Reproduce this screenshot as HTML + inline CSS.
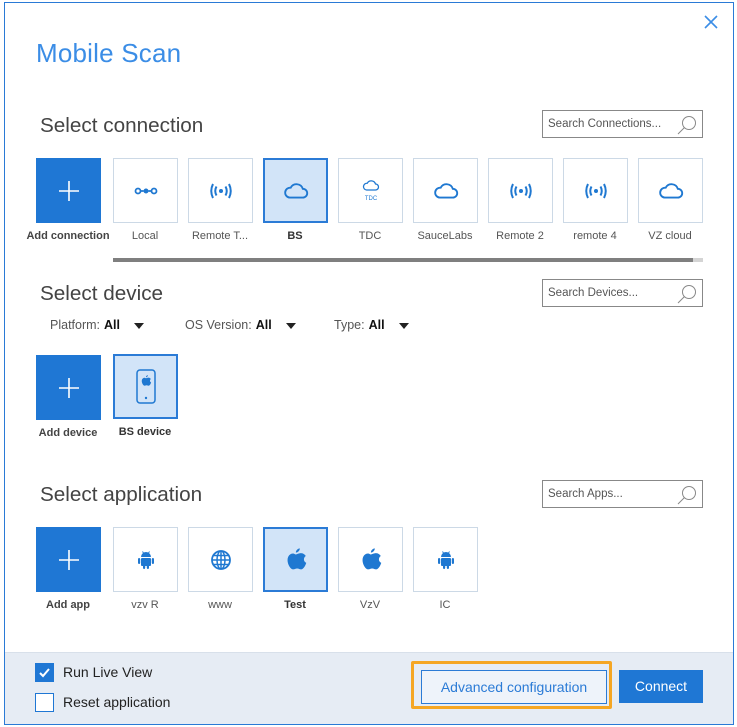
<!DOCTYPE html>
<html><head><style>
*{margin:0;padding:0;box-sizing:border-box}
body{width:737px;height:727px;background:#fff;position:relative;font-family:"Liberation Sans",sans-serif;overflow:hidden}
.win{position:absolute;left:4px;top:2px;width:730px;height:723px;border:1px solid #2a7ad6;background:#fff}
.foot{position:absolute;left:5px;top:652px;width:728px;height:72px;background:#e6ecf4;border-top:1px solid #d8e0ea}
.abs{position:absolute}
.h1{left:36px;top:38px;font-size:26px;color:#3b8de6;font-weight:300;letter-spacing:.2px}
.h2{font-size:20.7px;color:#444}
.tile{position:absolute;width:65px;height:65px;border:1px solid #ccd9e6;background:#fff;display:flex;align-items:center;justify-content:center;color:#1f78d1}
.tile.add{background:#1f77d4;border-color:#1f77d4}
.tile.sel{background:#d2e4f8;border:2px solid #2b7bd6}
.lbl{position:absolute;width:100px;text-align:center;font-size:11px;color:#555;white-space:nowrap}
.lbl.b{font-weight:bold;color:#333}
.search{position:absolute;left:542px;width:161px;height:28px;border:1px solid #888;font-size:11.5px;color:#555;padding:7px 0 0 5px}
.search svg{position:absolute;right:4px;top:3px}
.flt{position:absolute;top:318px;font-size:12.5px;color:#555}
.flt b{color:#111;margin-left:4px}
.tri{display:inline-block;width:0;height:0;border-left:5px solid transparent;border-right:5px solid transparent;border-top:6px solid #222;margin-left:14px;vertical-align:middle}
</style></head><body>
<div class="win"></div>
<div class="foot"></div>
<svg class="abs" style="left:703px;top:14px" width="16" height="16"><path d="M2 2L14 14M14 2L2 14" stroke="#3b8de6" stroke-width="1.6"/></svg>
<div class="abs h1">Mobile Scan</div>

<svg width="0" height="0" style="position:absolute"><defs>
<g id="rad"><circle cx="12" cy="8" r="2" fill="#1f78d1"/><path d="M7.5 3.5Q5 8 7.5 12.5M16.5 3.5Q19 8 16.5 12.5M4 1Q0.5 8 4 15M20 1Q23.5 8 20 15" fill="none" stroke="#1f78d1" stroke-width="2"/></g>
<g id="cld"><path d="M6 16H18A4 4 0 0 0 18 8A6 6 0 0 0 7 7A4.5 4.5 0 0 0 6 16Z" fill="none" stroke="#1f78d1" stroke-width="1.7"/></g>
<g id="apl"><path d="M12 6.5C13 6.5 14.5 5.5 16 5.5C18 5.5 19.3 6.8 19.8 7.7C17.8 9 18 12 20.2 13C19.6 15 18 18 16.2 18C15 18 14.6 17.3 13.2 17.3C11.8 17.3 11.3 18 10 18C8 18 5.8 14 5.8 11C5.8 7.5 8 5.8 10 5.8C11 5.8 11.6 6.5 12 6.5ZM12.2 5C12.2 3.5 13.5 2 15.2 1.8C15.3 3.5 13.8 5 12.2 5Z" fill="#1f78d1"/></g>
<g id="and"><path d="M7 9A5 5 0 0 1 17 9Z" fill="#1f78d1"/><rect x="7" y="10" width="10" height="8" rx="1" fill="#1f78d1"/><rect x="4" y="10" width="2.2" height="6" rx="1.1" fill="#1f78d1"/><rect x="17.8" y="10" width="2.2" height="6" rx="1.1" fill="#1f78d1"/><rect x="9" y="17" width="2.2" height="4" rx="1.1" fill="#1f78d1"/><rect x="12.8" y="17" width="2.2" height="4" rx="1.1" fill="#1f78d1"/><path d="M8.5 3.5L9.5 5M15.5 3.5L14.5 5" stroke="#1f78d1"/></g>
<g id="plus"><path d="M10 0V20M0 10H20" stroke="#fff" stroke-width="1.6"/></g>
<g id="mag"><circle cx="13" cy="9" r="6.5" fill="none" stroke="#888"/><path d="M8.5 13.5L2 20" stroke="#888"/></g>
</defs></svg>

<div class="abs h2" style="left:40px;top:114px">Select connection</div>
<div class="search" style="top:110px">Search Connections...<svg width="22" height="22"><use href="#mag"/></svg></div>

<div class="tile add" style="left:36px;top:158px"><svg width="20" height="20"><use href="#plus"/></svg></div>
<div class="lbl b" style="left:18px;top:230px;color:#444">Add connection</div>
<div class="tile" style="left:113px;top:158px"><svg width="24" height="10"><circle cx="4" cy="5" r="2.5" fill="none" stroke="#1f78d1" stroke-width="1.8"/><circle cx="12" cy="5" r="2.5" fill="#1f78d1"/><circle cx="20" cy="5" r="2.5" fill="none" stroke="#1f78d1" stroke-width="1.8"/><path d="M6.5 5H9.5M14.5 5H17.5" stroke="#1f78d1" stroke-width="1.8"/></svg></div>
<div class="lbl" style="left:95px;top:230px">Local</div>

<div class="tile" style="left:188px;top:158px"><svg width="24" height="16"><use href="#rad"/></svg></div>
<div class="lbl" style="left:170px;top:230px">Remote T...</div>
<div class="tile sel" style="left:263px;top:158px"><svg width="26" height="22"><g transform="scale(1.1)"><use href="#cld"/></g></svg></div>
<div class="lbl b" style="left:245px;top:230px">BS</div>
<div class="tile" style="left:338px;top:158px"><svg width="24" height="24"><g transform="translate(3,-1) scale(.75)"><use href="#cld"/></g><text x="12" y="21" font-size="6" fill="#1f78d1" text-anchor="middle" font-family="Liberation Sans">TDC</text></svg></div>
<div class="lbl" style="left:320px;top:230px">TDC</div>
<div class="tile" style="left:413px;top:158px"><svg width="26" height="22"><g transform="scale(1.1)"><use href="#cld"/></g></svg></div>
<div class="lbl" style="left:395px;top:230px">SauceLabs</div>
<div class="tile" style="left:488px;top:158px"><svg width="24" height="16"><use href="#rad"/></svg></div>
<div class="lbl" style="left:470px;top:230px">Remote 2</div>
<div class="tile" style="left:563px;top:158px"><svg width="24" height="16"><use href="#rad"/></svg></div>
<div class="lbl" style="left:545px;top:230px">remote 4</div>
<div class="tile" style="left:638px;top:158px"><svg width="26" height="22"><g transform="scale(1.1)"><use href="#cld"/></g></svg></div>
<div class="lbl" style="left:620px;top:230px">VZ cloud</div>
<div class="abs" style="left:113px;top:258px;width:590px;height:4px;background:#d4d4d4"></div>
<div class="abs" style="left:113px;top:258px;width:580px;height:4px;background:#7f7f7f"></div>

<div class="abs h2" style="left:40px;top:282px">Select device</div>
<div class="search" style="top:279px">Search Devices...<svg width="22" height="22"><use href="#mag"/></svg></div>
<div class="flt" style="left:50px">Platform:<b>All</b><span class="tri"></span></div>
<div class="flt" style="left:185px">OS Version:<b>All</b><span class="tri"></span></div>
<div class="flt" style="left:334px">Type:<b>All</b><span class="tri"></span></div>

<div class="tile add" style="left:36px;top:355px"><svg width="20" height="20"><use href="#plus"/></svg></div>
<div class="lbl b" style="left:18px;top:427px;color:#444">Add device</div>
<div class="tile sel" style="left:113px;top:354px"><svg width="22" height="36"><rect x="2" y="1" width="18" height="33" rx="3" fill="none" stroke="#1f78d1" stroke-width="1.5"/><g transform="translate(3,5) scale(.65)"><use href="#apl"/></g><circle cx="11" cy="29" r="1.2" fill="#1f78d1"/></svg></div>
<div class="lbl b" style="left:95px;top:426px">BS device</div>

<div class="abs h2" style="left:40px;top:483px">Select application</div>
<div class="search" style="top:480px">Search Apps...<svg width="22" height="22"><use href="#mag"/></svg></div>

<div class="tile add" style="left:36px;top:527px"><svg width="20" height="20"><use href="#plus"/></svg></div>
<div class="lbl b" style="left:18px;top:599px;color:#444">Add app</div>
<div class="tile" style="left:113px;top:527px"><svg width="24" height="24"><use href="#and"/></svg></div>
<div class="lbl" style="left:95px;top:599px">vzv R</div>
<div class="tile" style="left:188px;top:527px"><svg width="22" height="22"><circle cx="11" cy="11" r="9" fill="none" stroke="#1f78d1" stroke-width="1.8"/><ellipse cx="11" cy="11" rx="4" ry="9" fill="none" stroke="#1f78d1" stroke-width="1.5"/><path d="M2 11H20M3.5 6.5H18.5M3.5 15.5H18.5M11 2V20" stroke="#1f78d1" stroke-width="1.5"/></svg></div>
<div class="lbl" style="left:170px;top:599px">www</div>
<div class="tile sel" style="left:263px;top:527px"><svg width="26" height="26"><g transform="translate(-3,-1) scale(1.3)"><use href="#apl"/></g></svg></div>
<div class="lbl b" style="left:245px;top:599px">Test</div>
<div class="tile" style="left:338px;top:527px"><svg width="26" height="26"><g transform="translate(-3,-1) scale(1.3)"><use href="#apl"/></g></svg></div>
<div class="lbl" style="left:320px;top:599px">VzV</div>
<div class="tile" style="left:413px;top:527px"><svg width="24" height="24"><use href="#and"/></svg></div>
<div class="lbl" style="left:395px;top:599px">IC</div>

<div class="abs" style="left:35px;top:663px;width:19px;height:19px;background:#1f77d4"><svg width="19" height="19"><path d="M5 10L8 13L14 6" fill="none" stroke="#fff" stroke-width="2"/></svg></div>
<div class="abs" style="left:63px;top:664px;font-size:14px;color:#222">Run Live View</div>
<div class="abs" style="left:35px;top:693px;width:19px;height:19px;border:1px solid #1f77d4;background:#fff"></div>
<div class="abs" style="left:63px;top:694px;font-size:14px;color:#222">Reset application</div>

<div class="abs" style="left:411px;top:661px;width:201px;height:48px;border:3px solid #f5a623;border-radius:2px"></div>
<div class="abs" style="left:421px;top:670px;width:186px;height:34px;border:1px solid #2b7bd6;background:#eef3fa;color:#2b7bd6;font-size:14px;text-align:center;line-height:32px">Advanced configuration</div>
<div class="abs" style="left:619px;top:670px;width:84px;height:33px;background:#1f77d4;color:#fff;font-size:14px;text-align:center;line-height:33px">Connect</div>
</body></html>
